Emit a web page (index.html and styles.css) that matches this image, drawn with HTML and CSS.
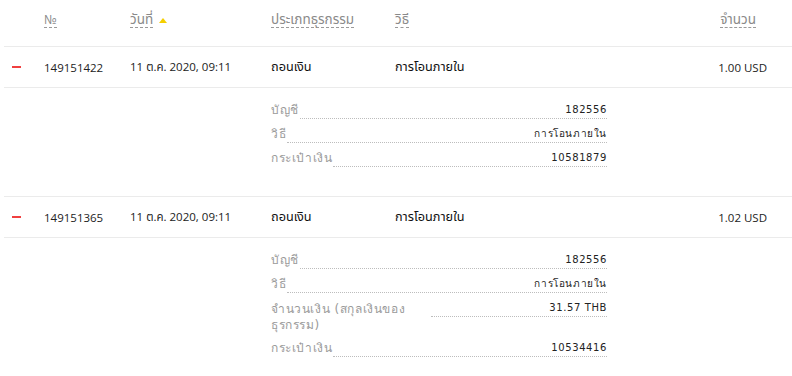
FILE: index.html
```html
<!DOCTYPE html>
<html lang="th">
<head>
<meta charset="utf-8">
<link rel="stylesheet" href="styles.css">
</head>
<body>
<div class="table">
  <div class="row head">
    <div class="cell"></div>
    <div class="cell"><span class="sort num">№</span></div>
    <div class="cell"><span class="sort th">วันที่</span><span class="tri"></span></div>
    <div class="cell"><span class="sort th">ประเภทธุรกรรม</span></div>
    <div class="cell"><span class="sort th">วิธี</span></div>
    <div class="cell amount"><span class="sort th">จำนวน</span></div>
  </div>

  <div class="row item">
    <div class="cell"><span class="minus"></span></div>
    <div class="cell">149151422</div>
    <div class="cell">11 ต.ค. 2020, 09:11</div>
    <div class="cell dark th">ถอนเงิน</div>
    <div class="cell dark th">การโอนภายใน</div>
    <div class="cell amount">1.00 USD</div>
  </div>
  <div class="details">
    <div class="drow"><span class="dlabel">บัญชี</span><span class="dval">182556</span></div>
    <div class="drow"><span class="dlabel">วิธี</span><span class="dval">การโอนภายใน</span></div>
    <div class="drow"><span class="dlabel">กระเป๋าเงิน</span><span class="dval">10581879</span></div>
  </div>

  <div class="row item">
    <div class="cell"><span class="minus"></span></div>
    <div class="cell">149151365</div>
    <div class="cell">11 ต.ค. 2020, 09:11</div>
    <div class="cell dark th">ถอนเงิน</div>
    <div class="cell dark th">การโอนภายใน</div>
    <div class="cell amount">1.02 USD</div>
  </div>
  <div class="details last">
    <div class="drow"><span class="dlabel">บัญชี</span><span class="dval">182556</span></div>
    <div class="drow"><span class="dlabel">วิธี</span><span class="dval">การโอนภายใน</span></div>
    <div class="drow"><span class="dlabel wrap">จำนวนเงิน (สกุลเงินของธุรกรรม)</span><span class="dval">31.57 THB</span></div>
    <div class="drow"><span class="dlabel">กระเป๋าเงิน</span><span class="dval">10534416</span></div>
  </div>
</div>
</body>
</html>
```
FILE: styles.css
```css
html, body {
  margin: 0;
  padding: 0;
  background: #fff;
}
body {
  font-family: "Open Sans", "Noto Sans", "Noto Sans Thai", sans-serif;
  font-size: 11.5px;
  color: #222;
}
.table {
  margin-left: 4px;
}
.row {
  display: grid;
  grid-template-columns: 40px 86px 141px 124px 1fr 120px;
  align-items: center;
  padding-right: 25px;
  border-bottom: 1px solid #ebebeb;
}
.head {
  height: 46px;
  color: #8a8a8a;
}
.head .cell {
  display: flex;
  align-items: center;
  padding-bottom: 6px;
}
.sort {
  border-bottom: 1px dashed #9a9a9a;
  line-height: 15px;
}
.sort.num {
  font-size: 12.5px;
}
.sort.th {
  font-size: 13.5px;
}
.tri {
  width: 0;
  height: 0;
  margin-left: 6px;
  border-left: 4px solid transparent;
  border-right: 4px solid transparent;
  border-bottom: 5px solid #f5cf00;
}
.head .amount {
  justify-content: flex-end;
  padding-right: 11px;
}
.item {
  height: 40px;
}
.item .th {
  font-size: 12.7px;
}
.amount {
  text-align: right;
}
.dark {
  color: #111;
}
.minus {
  display: block;
  width: 9px;
  height: 2px;
  margin-left: 8px;
  background: #f04040;
}
.details {
  padding: 15px 0 21px 267px;
  border-bottom: 1px solid #ebebeb;
  font-family: "DejaVu Sans", Verdana, sans-serif;
  font-size: 10px;
  letter-spacing: 0.6px;
}
.details.last {
  border-bottom: none;
}
.drow {
  display: flex;
  align-items: flex-start;
  width: 336px;
  margin-bottom: 8px;
}
.dlabel {
  color: #9a9a9a;
  font-size: 12px;
  line-height: 14px;
  max-width: 150px;
  padding-right: 1px;
}
.dlabel.wrap {
  width: 150px;
  line-height: 16px;
  padding-right: 10px;
}
.dval {
  flex: 1;
  text-align: right;
  color: #222;
  line-height: 14px;
  padding-bottom: 1px;
  border-bottom: 1px dotted #bdbdbd;
}
```
